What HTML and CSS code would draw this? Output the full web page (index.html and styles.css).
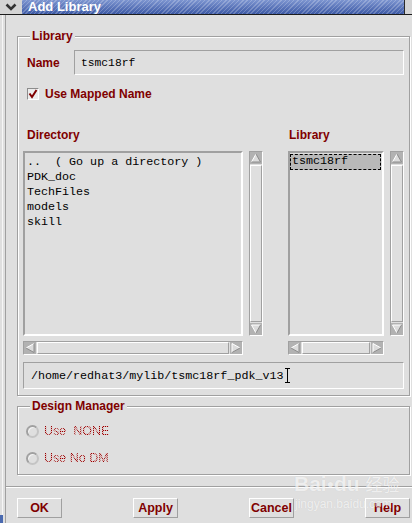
FILE: index.html
```html
<!DOCTYPE html>
<html lang="en">
<head>
    <meta charset="UTF-8">
    <title>Add Library</title>
    <link rel="stylesheet" href="styles.css">
</head>
<body>
    <!-- Window title bar -->
    <div class="titlebar">
        <div class="menu-btn">
            <svg width="12" height="8" viewBox="0 0 12 8"><polyline points="1.5,1.5 6,6 10.5,1.5" fill="none" stroke="#333" stroke-width="2.6"/></svg>
        </div>
        <div class="title">Add Library</div>
        <div class="title-end"></div>
    </div>

    <div class="frame">
        <div class="dialog">
            <!-- Library group -->
            <fieldset class="group lib-group">
                <legend>Library</legend>

                <div class="name-row">
                    <span class="label name-label">Name</span>
                    <div class="field name-field">tsmc18rf</div>
                </div>

                <div class="check-row">
                    <span class="checkbox">
                        <svg width="10" height="10" viewBox="0 0 10 10"><polyline points="1.5,4.5 4,8 8.5,1" fill="none" stroke="#800000" stroke-width="2"/></svg>
                    </span>
                    <span class="label">Use Mapped Name</span>
                </div>

                <div class="lists">
                    <div class="pane dir-pane">
                        <div class="label pane-head">Directory</div>
                        <div class="pane-body">
                            <div class="listbox">
                                <div class="item">..  ( Go up a directory )</div>
                                <div class="item">PDK_doc</div>
                                <div class="item">TechFiles</div>
                                <div class="item">models</div>
                                <div class="item">skill</div>
                            </div>
                            <div class="vscroll">
                                <div class="arrow"><svg width="10" height="10" viewBox="0 0 10 10"><polygon points="5,1 9.5,9 0.5,9" fill="#dcdcdc"/><polyline points="0.5,9 5,1" stroke="#fff" fill="none"/><polyline points="5,1 9.5,9 0.5,9" stroke="#8c8c8c" fill="none"/></svg></div>
                                <div class="thumb"></div>
                                <div class="arrow"><svg width="10" height="10" viewBox="0 0 10 10"><polygon points="0.5,1 9.5,1 5,9" fill="#dcdcdc"/><polyline points="5,9 0.5,1 9.5,1" stroke="#fff" fill="none"/><polyline points="9.5,1 5,9" stroke="#8c8c8c" fill="none"/></svg></div>
                            </div>
                            <div class="hscroll">
                                <div class="arrow"><svg width="10" height="10" viewBox="0 0 10 10"><polygon points="1,5 9,0.5 9,9.5" fill="#dcdcdc"/><polyline points="9,0.5 1,5" stroke="#fff" fill="none"/><polyline points="1,5 9,9.5 9,0.5" stroke="#8c8c8c" fill="none"/></svg></div>
                                <div class="thumb"></div>
                                <div class="arrow"><svg width="10" height="10" viewBox="0 0 10 10"><polygon points="1,0.5 9,5 1,9.5" fill="#dcdcdc"/><polyline points="1,9.5 1,0.5 9,5" stroke="#fff" fill="none"/><polyline points="9,5 1,9.5" stroke="#8c8c8c" fill="none"/></svg></div>
                            </div>
                        </div>
                    </div>

                    <div class="pane lib-pane">
                        <div class="label pane-head">Library</div>
                        <div class="pane-body">
                            <div class="listbox">
                                <div class="item selected">tsmc18rf</div>
                            </div>
                            <div class="vscroll">
                                <div class="arrow"><svg width="10" height="10" viewBox="0 0 10 10"><polygon points="5,1 9.5,9 0.5,9" fill="#dcdcdc"/><polyline points="0.5,9 5,1" stroke="#fff" fill="none"/><polyline points="5,1 9.5,9 0.5,9" stroke="#8c8c8c" fill="none"/></svg></div>
                                <div class="thumb"></div>
                                <div class="arrow"><svg width="10" height="10" viewBox="0 0 10 10"><polygon points="0.5,1 9.5,1 5,9" fill="#dcdcdc"/><polyline points="5,9 0.5,1 9.5,1" stroke="#fff" fill="none"/><polyline points="9.5,1 5,9" stroke="#8c8c8c" fill="none"/></svg></div>
                            </div>
                            <div class="hscroll">
                                <div class="arrow"><svg width="10" height="10" viewBox="0 0 10 10"><polygon points="1,5 9,0.5 9,9.5" fill="#dcdcdc"/><polyline points="9,0.5 1,5" stroke="#fff" fill="none"/><polyline points="1,5 9,9.5 9,0.5" stroke="#8c8c8c" fill="none"/></svg></div>
                                <div class="thumb"></div>
                                <div class="arrow"><svg width="10" height="10" viewBox="0 0 10 10"><polygon points="1,0.5 9,5 1,9.5" fill="#dcdcdc"/><polyline points="1,9.5 1,0.5 9,5" stroke="#fff" fill="none"/><polyline points="9,5 1,9.5" stroke="#8c8c8c" fill="none"/></svg></div>
                            </div>
                        </div>
                    </div>
                </div>

                <div class="field path-field"><span class="path-text">/home/redhat3/mylib/tsmc18rf_pdk_v13</span><span class="caret"></span></div>
            </fieldset>

            <!-- Design manager group -->
            <fieldset class="group dm-group">
                <legend>Design Manager</legend>
                <div class="radio-row">
                    <span class="radio"></span>
                    <span class="disabled">Use  NONE</span>
                </div>
                <div class="radio-row">
                    <span class="radio"></span>
                    <span class="disabled">Use No DM</span>
                </div>
            </fieldset>

            <div class="separator"></div>

            <div class="buttons">
                <button class="btn">OK</button>
                <button class="btn">Apply</button>
                <button class="btn">Cancel</button>
                <button class="btn">Help</button>
            </div>
        </div>
    </div>

    <!-- Watermark -->
    <div class="watermark">
        <div class="wm-main">Bai<span class="wm-paw">&#9679;</span>du <span class="wm-cn">经验</span></div>
        <div class="wm-sub">jingyan.baidu.com</div>
    </div>
    <div class="taskbar-bit"></div>
</body>
</html>
```

FILE: styles.css
```css
/* Base */
* {
    box-sizing: border-box;
}

body {
    margin: 0;
    width: 412px;
    height: 523px;
    overflow: hidden;
    position: relative;
    background: #dfdfdf;
    font-family: "Liberation Sans", Arial, sans-serif;
    font-size: 12px;
    color: #000;
}

/* Title bar */
.titlebar {
    display: flex;
    height: 15px;
    border-bottom: 1px solid #1c1c1c;
}

.menu-btn {
    width: 22px;
    background: #d4d4d4;
    display: flex;
    align-items: center;
    justify-content: center;
}

.title {
    flex: 1;
    color: #fff;
    font-weight: bold;
    font-size: 13px;
    line-height: 13px;
    padding-left: 6px;
    background:
        repeating-linear-gradient(135deg, rgba(255, 255, 255, 0.22) 0 1px, transparent 1px 3px),
        linear-gradient(#7d95d0, #3d5aa6);
}

.title-end {
    width: 8px;
    border-left: 1px solid #2a2a2a;
    background: #d4d4d4;
}

/* Window frame */
.frame {
    margin-left: 2px;
    padding-left: 2px;
    border-left: 1px solid #f6f6f6;
    height: 508px;
}

.dialog {
    height: 100%;
    padding-top: 14px;
    border-left: 1px solid #a0a0a0;
}

/* Group boxes */
.group {
    margin: 0 2px 0 11px;
    padding: 0 5px 6px;
    min-width: 0;
    border: 1px solid #a0a0a0;
    box-shadow: inset 1px 1px 0 #fff, 1px 1px 0 #fff;
}

.group legend {
    margin-left: 7px;
    padding: 0 2px;
    font-weight: bold;
    font-size: 12px;
    line-height: 15px;
    color: #800000;
    background: #dfdfdf;
}

.label {
    font-weight: bold;
    font-size: 12px;
    line-height: 14px;
    color: #800000;
}

/* Text fields */
.field {
    border: 1px solid;
    border-color: #a0a0a0 #fff #fff #a0a0a0;
    font-family: "Liberation Mono", "DejaVu Sans Mono", monospace;
    font-size: 11.7px;
    display: flex;
    align-items: center;
}

.name-row {
    display: flex;
    align-items: center;
    margin-top: 6px;
    padding-left: 4px;
}

.name-label {
    width: 47px;
}

.name-field {
    flex: 1;
    height: 25px;
    padding-left: 6px;
    font-size: 11.3px;
}

.check-row {
    display: flex;
    align-items: center;
    gap: 6px;
    margin-top: 13px;
    padding-left: 4px;
    height: 12px;
}

.checkbox {
    width: 12px;
    height: 12px;
    border: 1px solid;
    border-color: #8c8c8c #fff #fff #8c8c8c;
    background: #ececec;
    display: flex;
    align-items: center;
    justify-content: center;
}

/* Lists */
.lists {
    display: flex;
    justify-content: space-between;
    margin-top: 28px;
}

.dir-pane {
    width: 240px;
}

.lib-pane {
    width: 116px;
}

.pane-head {
    margin-bottom: 9px;
}

.dir-pane .pane-head {
    padding-left: 4px;
}

.lib-pane .pane-head {
    padding-left: 1px;
}

.pane-body {
    display: grid;
    grid-template-columns: 1fr 14px;
    grid-template-rows: 185px 14px;
    column-gap: 6px;
    row-gap: 5px;
}

.listbox {
    border: 2px solid;
    border-color: #a0a0a0 #fff #fff #a0a0a0;
    padding: 2px 2px 0;
    font-family: "Liberation Mono", "DejaVu Sans Mono", monospace;
    font-size: 11.7px;
    line-height: 15px;
    overflow: hidden;
}

.item {
    white-space: pre;
}

.lib-pane .listbox {
    padding: 1px 0 0;
}

.item.selected {
    margin: 0 1px 0 0;
    padding-left: 1px;
    background: #b9b9b9;
    border: 1px dashed #000;
    line-height: 13px;
    height: 16px;
}

/* Scrollbars */
.vscroll,
.hscroll {
    border: 1px solid;
    border-color: #a0a0a0 #fff #fff #a0a0a0;
    display: flex;
}

.vscroll {
    flex-direction: column;
}

.hscroll {
    grid-column: 1;
}

.arrow {
    width: 12px;
    height: 12px;
    background: #b2b2b2;
    display: flex;
    align-items: center;
    justify-content: center;
    flex: none;
}

.thumb {
    flex: 1;
    border: 1px solid;
    border-color: #fff #a0a0a0 #a0a0a0 #fff;
}

.vscroll .thumb {
    margin: 1px 0;
}

.hscroll .thumb {
    margin: 0 1px;
}

.path-field {
    height: 27px;
    margin-top: 7px;
    padding-left: 7px;
}

.path-text {
    white-space: pre;
}

.caret {
    display: inline-block;
    width: 5px;
    height: 15px;
    margin-left: 1px;
    border-top: 1px solid #000;
    border-bottom: 1px solid #000;
    background: linear-gradient(90deg, transparent 2px, #000 2px 3px, transparent 3px);
}

/* Design manager */
.dm-group {
    margin-top: 3px;
    padding-bottom: 8px;
}

.radio-row {
    display: flex;
    align-items: center;
    gap: 5px;
    height: 16px;
    padding-left: 3px;
    margin-top: 9px;
}

.radio-row + .radio-row {
    margin-top: 11px;
}

.radio {
    width: 13px;
    height: 13px;
    border-radius: 50%;
    border: 2px solid;
    border-color: #a0a0a0 #c4c4c4 #c4c4c4 #a0a0a0;
    box-shadow: inset 1px 1px 0 #f4f4f4;
}

.disabled {
    font-size: 12.5px;
    white-space: pre;
    color: transparent;
    background: repeating-conic-gradient(#900000 0 25%, #e8b0b0 0 50%) 0 0 / 2px 2px;
    -webkit-background-clip: text;
    background-clip: text;
}

/* Bottom bar */
.separator {
    margin-top: 11px;
    border-top: 1px solid #a0a0a0;
    border-bottom: 1px solid #fff;
}

.buttons {
    display: flex;
    justify-content: space-between;
    margin-top: 10px;
    padding: 0 2px 0 11px;
}

.btn {
    width: 45px;
    height: 20px;
    padding: 0;
    background: #dfdfdf;
    border: 1px solid;
    border-color: #fff #a0a0a0 #a0a0a0 #fff;
    font-family: "Liberation Sans", Arial, sans-serif;
    font-weight: bold;
    font-size: 12.5px;
    color: #800000;
}

/* Watermark over the dialog */
.watermark {
    position: absolute;
    left: 294px;
    top: 470px;
    color: rgba(255, 255, 255, 0.7);
    text-shadow: 0 0 1px rgba(0, 0, 0, 0.1);
    pointer-events: none;
}

.wm-main {
    font-family: "Liberation Sans", Arial, sans-serif;
    font-weight: bold;
    font-size: 21px;
    line-height: 28px;
}

.wm-paw {
    font-size: 12px;
    vertical-align: top;
}

.wm-cn {
    font-family: "Noto Sans CJK SC", sans-serif;
    font-weight: normal;
    font-size: 17px;
}

.wm-sub {
    font-size: 12px;
    line-height: 13px;
    padding-left: 1px;
}

.taskbar-bit {
    position: absolute;
    left: 0;
    bottom: 0;
    width: 3px;
    height: 8px;
    background: #4a6ab0;
}
```
